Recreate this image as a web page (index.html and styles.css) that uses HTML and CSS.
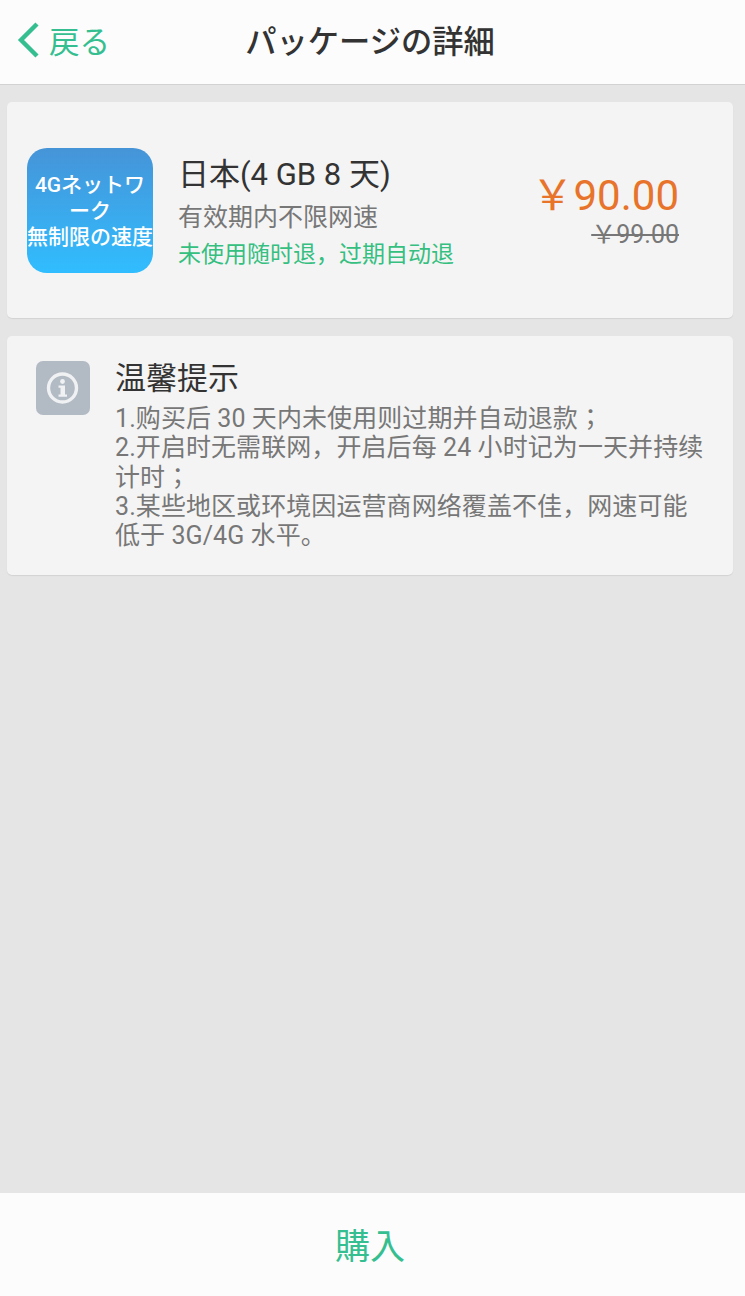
FILE: index.html
```html
<!DOCTYPE html>
<html lang="ja">
<head>
    <meta charset="UTF-8">
    <meta name="viewport" content="width=device-width, initial-scale=1.0">
    <title>パッケージの詳細</title>
    <link rel="stylesheet" href="styles.css">
</head>
<body>
    <header class="topbar">
        <a class="back">
            <svg class="back-icon" width="24" height="38" viewBox="0 0 24 38">
                <path d="M21 3 L5 19 L21 35" fill="none" stroke="#35bf90" stroke-width="4.4"/>
            </svg>
            <span>戻る</span>
        </a>
        <h1>パッケージの詳細</h1>
    </header>
    <main class="content">
        <section class="card package">
            <div class="thumb">
                <span>4Gネットワーク</span>
                <span class="thumb-nowrap">無制限の速度</span>
            </div>
            <div class="package-info">
                <h2>日本(4 GB 8 天)</h2>
                <p class="speed" lang="zh-CN">有效期内不限网速</p>
                <p class="refund" lang="zh-CN">未使用随时退，过期自动退</p>
            </div>
            <div class="price">
                <div class="price-now">￥90.00</div>
                <div class="price-old">￥99.00</div>
            </div>
        </section>
        <section class="card notice" lang="zh-CN">
            <div class="notice-icon">
                <svg width="34" height="34" viewBox="0 0 34 34">
                    <circle cx="16.5" cy="17" r="14" fill="none" stroke="#f0f1f3" stroke-width="3.4"/>
                    <circle cx="16.5" cy="10.5" r="2.4" fill="#f0f1f3"/>
                    <path d="M12.5 14.5h6.5v9h2v2.2h-8.5v-2.2h2v-6.8h-2z" fill="#f0f1f3"/>
                </svg>
            </div>
            <div class="notice-body">
                <h3>温馨提示</h3>
                <p>1.购买后 30 天内未使用则过期并自动退款<span lang="ja">；</span><br>2.开启时无需联网，开启后每 24 小时记为一天并持续计时<span lang="ja">；</span><br>3.某些地区或环境因运营商网络覆盖不佳，网速可能低于 3G/4G 水平。</p>
            </div>
        </section>
    </main>
    <footer class="buybar">購入</footer>
</body>
</html>
```

FILE: styles.css
```css
* {
    box-sizing: border-box;
}

html, body {
    height: 100%;
}

body {
    margin: 0;
    display: flex;
    flex-direction: column;
    height: 1296px;
    background-color: #e5e5e5;
    font-family: Roboto, "Noto Sans CJK JP", sans-serif;
    color: #333;
}

h1, h2, h3, p {
    margin: 0;
    font-weight: normal;
}

.topbar {
    position: relative;
    display: flex;
    align-items: center;
    justify-content: center;
    height: 85px;
    padding: 0 5px 6px 0;
    background-color: #fcfcfc;
    border-bottom: 1px solid #d2d2d2;
}

.topbar h1 {
    font-size: 31.3px;
    font-weight: 500;
    color: #333;
}

.back {
    position: absolute;
    left: 16px;
    top: 18px;
    display: flex;
    align-items: center;
    gap: 9px;
    font-size: 30.5px;
    color: #35bf90;
}

.content {
    flex: 1;
    padding: 17px 12px 0 7px;
}

.card {
    display: flex;
    background-color: #f4f4f4;
    border-radius: 5px;
    box-shadow: 0 1px 1px rgba(0, 0, 0, 0.08);
}

.package {
    align-items: flex-start;
    height: 216px;
    padding: 46px 54px 0 20px;
    margin-bottom: 18px;
}

.thumb {
    display: flex;
    flex-direction: column;
    justify-content: center;
    flex-shrink: 0;
    width: 126px;
    height: 125px;
    border-radius: 20px;
    background: linear-gradient(#4694d8, #30bdff);
    color: #fff;
    font-size: 21px;
    font-weight: 500;
    line-height: 26px;
    text-align: center;
    padding: 0 5px;
}

.thumb-nowrap {
    white-space: nowrap;
    margin: 0 -5px;
}

.package-info {
    flex: 1;
    margin-left: 25px;
    padding-top: 4px;
}

.package-info h2 {
    font-size: 31px;
    line-height: 46px;
    color: #333;
}

.speed {
    font-size: 25px;
    line-height: 40px;
    color: #777;
}

.refund {
    font-size: 23px;
    line-height: 34px;
    color: #35bf80;
}

.price {
    text-align: right;
    margin-top: 22px;
}

.price-now {
    font-size: 42px;
    line-height: 52px;
    color: #e8732a;
}

.price-old {
    font-size: 25px;
    line-height: 26px;
    color: #777;
    text-decoration: line-through;
}

.notice {
    height: 239px;
    padding: 25px 26px 0 29px;
}

.notice-icon {
    display: flex;
    align-items: center;
    justify-content: center;
    flex-shrink: 0;
    width: 54px;
    height: 54px;
    border-radius: 7px;
    background-color: #b2bac4;
}

.notice-body {
    margin-left: 25px;
}

.notice-body h3 {
    font-size: 31px;
    line-height: 36px;
    color: #333;
}

.notice-body p {
    margin-top: 7px;
    font-size: 25px;
    line-height: 29.3px;
    letter-spacing: 0.08px;
    color: #777;
}

.buybar {
    display: flex;
    align-items: center;
    justify-content: center;
    height: 103px;
    padding: 0 5px 3px 0;
    background-color: #fcfcfc;
    font-size: 35px;
    color: #35bf90;
}
```
